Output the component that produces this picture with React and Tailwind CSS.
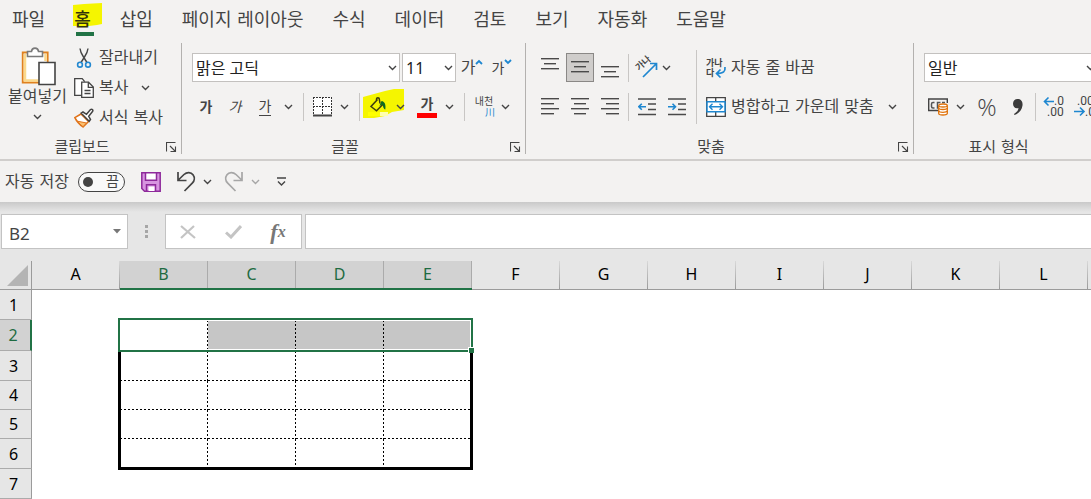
import { useState } from "react";
import clsx from "clsx";

const tabs = ["파일", "홈", "삽입", "페이지 레이아웃", "수식", "데이터", "검토", "보기", "자동화", "도움말"];
const columns = ["A", "B", "C", "D", "E", "F", "G", "H", "I", "J", "K", "L", "M"];
const rows = [
  { id: 1, height: "h-[30px]" },
  { id: 2, height: "h-[31px]" },
  { id: 3, height: "h-[30px]" },
  { id: 4, height: "h-[29px]" },
  { id: 5, height: "h-[29px]" },
  { id: 6, height: "h-[30px]" },
  { id: 7, height: "h-[30px]" },
];
const selectedColumns = ["B", "C", "D", "E"];

/* Shared pieces */

function Chevron({ className }) {
  return (
    <svg className={clsx("w-[9px] h-[6px] shrink-0", className)} viewBox="0 0 9 6" fill="none" stroke="currentColor" strokeWidth="1.4">
      <path d="M1 1l3.5 3.5L8 1" />
    </svg>
  );
}

function IconButton({ label, className, children }) {
  return (
    <button type="button" aria-label={label} className={clsx("flex items-center justify-center shrink-0 h-7", className)}>
      {children}
    </button>
  );
}

function MenuButton({ label, className }) {
  return (
    <IconButton label={label} className={clsx("w-3", className)}>
      <Chevron />
    </IconButton>
  );
}

function Divider({ className }) {
  return <div className={clsx("w-px shrink-0 bg-[#c8c6c4]", className)} />;
}

function Dropdown({ label, value, className }) {
  return (
    <div className={clsx("relative shrink-0 h-[29px]", className)}>
      <select
        aria-label={label}
        defaultValue={value}
        className="appearance-none w-full h-full bg-white border border-[#c3c1bf] pl-[3px] pr-4 text-base leading-[26px] text-[#222] font-['Noto_Sans','Noto_Sans_CJK_KR',sans-serif] outline-none"
      >
        <option>{value}</option>
      </select>
      <Chevron className="absolute right-[3px] top-[12px] pointer-events-none" />
    </div>
  );
}

function Group({ title, launcher = true, className, children }) {
  return (
    <section className={clsx("flex flex-col justify-between shrink-0 h-[111px] border-r border-[#b3b1af]", className)}>
      {children}
      <div className="flex items-end h-[14px] pr-[3px]">
        <h2 className="flex-1 text-center text-[15px] leading-[14px]">{title}</h2>
        {launcher ? (
          <button type="button" aria-label={`${title} 설정`} className="w-[14px] h-[14px] flex items-center justify-center">
            <svg className="w-[11px] h-[11px]" viewBox="0 0 11 11" fill="none" stroke="#444" strokeWidth="1.1">
              <path d="M.5 9.5v-9h9M4 4l5 5M9.5 4.5v5h-5" />
            </svg>
          </button>
        ) : (
          <span className="w-[20px]" />
        )}
      </div>
    </section>
  );
}

/* Icons */

function PasteIcon() {
  return (
    <svg className="w-[36px] h-[39px]" viewBox="0 0 36 39" fill="none">
      <path d="M2.700 5.500h25v30h-25z" fill="#fff" stroke="#e0811e" strokeWidth="1.800" />
      <path d="M5 7v26.500h14" stroke="#fbd98c" strokeWidth="2.500" />
      <path d="M25.500 7v7" stroke="#fbd98c" strokeWidth="2.500" />
      <path d="M7.500 9.500v-5h4c.5-4.500 6.500-4.500 7 0h4v5z" fill="#fff" stroke="#7a7a7a" strokeWidth="1.600" />
      <path d="M19 15.500h16v22H19z" fill="#fff" stroke="#444" strokeWidth="1.600" />
    </svg>
  );
}

function CutIcon() {
  return (
    <svg className="w-[20px] h-[20px]" viewBox="0 0 20 20" fill="none">
      <path d="M6 .5c.3 3 1.500 5.500 3.500 8.500l3.500 5.500M14 .5c-.3 3-1.500 5.500-3.500 8.500L7 14.500" stroke="#444" strokeWidth="1.400" />
      <circle cx="6" cy="16.700" r="2.400" stroke="#2388d0" strokeWidth="1.600" />
      <circle cx="14" cy="16.700" r="2.400" stroke="#2388d0" strokeWidth="1.600" />
    </svg>
  );
}

function CopyIcon() {
  return (
    <svg className="w-[20px] h-[20px]" viewBox="0 0 20 20" fill="none" stroke="#444" strokeWidth="1.300">
      <path d="M7.700 17.300H.7V.7h7.500l2.500 3" fill="#fff" />
      <path d="M7.700 4.200h6.800l4.800 4.800v10.300H7.700z" fill="#fff" />
      <path d="M14.300 4.500v4.800h4.800M10.500 12.500h6M10.500 15.500h6" />
    </svg>
  );
}

function BrushIcon() {
  return (
    <svg className="w-[20px] h-[20px]" viewBox="0 0 20 20" fill="none">
      <path d="M7 6L.8 9.700c1.700 3.500 4.500 6.800 8.200 9.300l5.500-5.500z" fill="#fff" stroke="#e0731a" strokeWidth="1.500" />
      <path d="M3.500 13.200l9 1.800-3.500 3.700c-2-1.500-4-3.300-5.500-5.500z" fill="#fbc070" stroke="#e0731a" />
      <path d="M7.200 5.200l1.800-1.200 3.500 2.300 4-4.800c1.500-1 3 .7 2 2L14.700 8.300l1.800 3.200-1.300 1.800z" fill="#fff" stroke="#444" strokeWidth="1.500" />
    </svg>
  );
}

function BordersIcon() {
  return (
    <svg className="w-[19px] h-[20px]" viewBox="0 0 19 20" fill="none" stroke="#333">
      <path d="M.5 .5h18v17H.5z" fill="#fff" stroke="none" />
      <path d="M.5 0v17M9.500 0v17M18.500 0v17M0 .5h19M0 9.500h19" strokeDasharray="2 1" />
      <path d="M0 18.500h19" stroke="#444" strokeWidth="2" />
    </svg>
  );
}

function BucketIcon() {
  return (
    <svg className="w-[20px] h-[20px] relative" viewBox="0 0 20 20" fill="none">
      <path d="M9.500 2.500L3 9.500l5.500 4.300 6.500-6.500M8.500 4V2c0-1.600 2.800-1.600 2.800 0l.7 4.500" stroke="#3b3b10" strokeWidth="1.500" />
      <path d="M13.500 4c3.500.5 4.500 4 3.800 8.500-2-.3-1.800-3-3-5l-2.800 1.500z" fill="#0c6a22" />
      <path d="M0 15h12v4H0z" fill="#ffff00" />
      <path d="M12 15h8v4h-8z" fill="#ffffb0" />
    </svg>
  );
}

function LinesIcon({ lines }) {
  return (
    <svg className="w-[18px] h-[20px]" viewBox="0 0 18 20" fill="#4a4a4a">
      {lines.map(([x, y, width]) => (
        <rect key={y} x={x} y={y} width={width} height="1.400" />
      ))}
    </svg>
  );
}

function IndentIcon({ increase }) {
  return (
    <svg className="w-[18px] h-[18px]" viewBox="0 0 18 18" fill="none">
      <path d="M0 1h18M10 6h8M10 11.500h8M0 16.500h18" stroke="#4a4a4a" strokeWidth="1.400" />
      <path d={increase ? "M0 8.700h7.500M4.500 5.700l3 3-3 3" : "M8 8.700H.8M3.800 5.700l-3 3 3 3"} stroke="#1e87d0" strokeWidth="1.600" />
    </svg>
  );
}

function OrientationIcon() {
  return (
    <svg className="w-[22px] h-[22px] overflow-visible" viewBox="0 0 22 22" fill="none">
      <text x="3" y="14" fontSize="9" fill="#444" fontWeight="700" transform="rotate(-42 3 14)">가나</text>
      <path d="M7 20L20 7M14 6.500h6.500V13" stroke="#1e87d0" strokeWidth="1.700" />
    </svg>
  );
}

function WrapIcon() {
  return (
    <svg className="w-[20px] h-[22px] overflow-visible" viewBox="0 0 20 22" fill="none">
      <text x="0" y="9" fontSize="9" fontWeight="700" fill="#444">가나</text>
      <text x="0" y="19" fontSize="9" fontWeight="700" fill="#444">다</text>
      <path d="M19 10c.5 4.500-1.500 6.500-8 6.500M14.500 12.500l-4 4 4 4" stroke="#1e87d0" strokeWidth="1.700" />
    </svg>
  );
}

function MergeIcon() {
  return (
    <svg className="w-[20px] h-[20px]" viewBox="0 0 20 20" fill="none">
      <path d="M.7 .7h18.600v18.600H.7zM9.700 1v4M9.700 15v4" stroke="#444" strokeWidth="1.300" fill="#fff" />
      <path d="M1 4.700h18v10H1z" fill="#fff" stroke="#1e87d0" strokeWidth="1.500" />
      <path d="M3.500 9.700h13M6.500 6.700l-3 3 3 3M13.500 6.700l3 3-3 3" stroke="#1e87d0" strokeWidth="1.400" />
    </svg>
  );
}

function CurrencyIcon() {
  return (
    <svg className="w-[20px] h-[18px]" viewBox="0 0 20 18" fill="none">
      <path d="M10 12.500H.7V1h18.600v4" stroke="#444" strokeWidth="1.400" />
      <path d="M6.500 4.500H5a1.500 1.500 0 0 0-1.500 1.500v2.500A1.500 1.500 0 0 0 5 10h1.500M11 10H9.500V4.500h3M14 4.500h3" stroke="#555" strokeWidth="1.500" />
      <path d="M10.700 7.500v8c0 2 8.600 2 8.600 0v-8" fill="#fff" stroke="#e0730b" strokeWidth="1.300" />
      <ellipse cx="15" cy="7.500" rx="4.300" ry="1.500" fill="#fff" stroke="#e0730b" strokeWidth="1.300" />
      <path d="M10.700 10c0 2 8.600 2 8.600 0M10.700 12.800c0 2 8.600 2 8.600 0" stroke="#e0730b" strokeWidth="1.300" />
    </svg>
  );
}

function DecimalIcon({ increase }) {
  return (
    <svg className="w-[22px] h-[22px] overflow-visible font-['Roboto',sans-serif]" viewBox="0 0 22 22" fill="none">
      <text x={increase ? 11 : 3} y="9" fontSize="12" fill="#444">{increase ? ".0" : ".00"}</text>
      <text x={increase ? 4 : 11} y="20" fontSize="12" fill="#444">{increase ? ".00" : ".0"}</text>
      <path
        d={increase ? "M11 5.500H1.500M5.500 1.500l-4 4 4 4" : "M0 15.500h10M6 11.500l4 4-4 4"}
        stroke="#1e87d0"
        strokeWidth="1.600"
      />
    </svg>
  );
}

/* Ribbon */

function TabBar() {
  const [active, setActive] = useState("홈");

  return (
    <nav className="flex gap-[29px] h-[43px] pl-3 pt-[7px] text-lg leading-[25px]">
      {tabs.map((tab) => (
        <button
          key={tab}
          type="button"
          onClick={() => setActive(tab)}
          className={clsx("relative shrink-0 h-[25px] whitespace-nowrap", tab === active && "font-medium text-[#33330a]")}
        >
          {tab === "홈" && (
            <svg className="absolute -left-[1px] -top-[4px] w-[29px] h-[24px]" viewBox="0 0 29 24">
              <path d="M0 2l11-1 18-1v21l-5 1-8 1H0z" fill="#f5f500" />
            </svg>
          )}
          <span className="relative">{tab}</span>
          {tab === active && <span className="absolute left-[2px] -bottom-[4px] w-[18px] h-[4px] bg-[#217346]" />}
        </button>
      ))}
    </nav>
  );
}

function ClipboardGroup() {
  return (
    <Group title="클립보드" className="w-[182px]">
      <div className="flex pl-[7px]">
        <button type="button" className="flex flex-col items-center w-[61px] pt-[4px] text-base leading-[22px]">
          <PasteIcon />
          <span className="whitespace-nowrap">붙여넣기</span>
          <Chevron className="mt-[6px]" />
        </button>
        <div className="flex flex-col pl-[6px] text-base leading-[30px]">
          <button type="button" className="flex items-center gap-[5px] h-[30px]">
            <CutIcon />
            잘라내기
          </button>
          <div className="flex items-center h-[30px]">
            <button type="button" className="flex items-center gap-[5px]">
              <CopyIcon />
              복사
            </button>
            <MenuButton label="복사 옵션" className="ml-[11px]" />
          </div>
          <button type="button" className="flex items-center gap-[5px] h-[30px]">
            <BrushIcon />
            서식 복사
          </button>
        </div>
      </div>
    </Group>
  );
}

function FontGroup() {
  return (
    <Group title="글꼴" className="w-[344px]">
      <div className="flex flex-col gap-[11px] pl-[10px] pt-[10px]">
        <div className="flex items-center h-[29px]">
          <Dropdown label="글꼴 이름" value="맑은 고딕" className="w-[208px]" />
          <Dropdown label="글꼴 크기" value="11" className="w-[54px] ml-[2px]" />
          <IconButton label="글꼴 크기 크게" className="w-[22px] ml-[5px] text-base">
            가
            <svg className="w-[8px] h-[6px] shrink-0 mb-[12px]" viewBox="0 0 8 6" fill="none" stroke="#1e87d0" strokeWidth="1.800">
              <path d="M1 5l3-3 3 3" />
            </svg>
          </IconButton>
          <IconButton label="글꼴 크기 작게" className="w-[20px] ml-[9px] text-sm">
            가
            <svg className="w-[8px] h-[6px] shrink-0 mb-[12px]" viewBox="0 0 8 6" fill="none" stroke="#1e87d0" strokeWidth="1.800">
              <path d="M1 1l3 3 3-3" />
            </svg>
          </IconButton>
        </div>
        <div className="flex items-center h-7 text-sm">
          <IconButton label="굵게" className="w-7 font-bold">가</IconButton>
          <IconButton label="기울임꼴" className="w-[30px] italic">가</IconButton>
          <IconButton label="밑줄" className="w-[30px]">
            <span className="border-b border-[#444] leading-[17px]">가</span>
          </IconButton>
          <MenuButton label="밑줄 옵션" className="ml-[2px]" />
          <Divider className="h-7 ml-[9px]" />
          <IconButton label="테두리" className="w-[22px] ml-[7px]"><BordersIcon /></IconButton>
          <MenuButton label="테두리 옵션" className="ml-[5px]" />
          <Divider className="h-7 ml-[9px]" />
          <div className="relative flex items-center ml-[7px]">
            <svg className="absolute -left-[4px] -top-[4px] w-[41px] h-[30px]" viewBox="0 0 41 30">
              <path d="M0 8l11-3 11-3L31 0h10v21l-12 2-7 4-11 2H0z" fill="#f5f500" />
            </svg>
            <IconButton label="채우기 색" className="w-[22px]"><BucketIcon /></IconButton>
            <MenuButton label="채우기 색 옵션" className="relative ml-[5px]" />
          </div>
          <IconButton label="글꼴 색" className="w-[20px] ml-[11px]">
            <span className="w-[20px] border-b-[5px] border-[#ff0000] leading-[17px] font-bold">가</span>
          </IconButton>
          <MenuButton label="글꼴 색 옵션" className="ml-[6px]" />
          <Divider className="h-7 ml-[9px]" />
          <IconButton label="윗주 필드 표시" className="w-[22px] ml-[8px] flex-col">
            <span className="text-[10px] leading-[10px]">내천</span>
            <span className="text-[10px] leading-[11px] self-end text-[#1e87d0]">川</span>
          </IconButton>
          <MenuButton label="윗주 옵션" className="ml-1" />
        </div>
      </div>
    </Group>
  );
}

function AlignmentGroup() {
  return (
    <Group title="맞춤" className="w-[388px]">
      <div className="flex pt-[7px] pl-[10px]">
        <div className="flex flex-col gap-[11px] pt-[3px] w-[160px]">
          <div className="flex items-center h-[29px]">
            <IconButton label="위쪽 맞춤" className="w-7"><LinesIcon lines={[[0, 0, 18], [3, 5, 12], [0, 10, 18]]} /></IconButton>
            <IconButton label="가운데 맞춤" className="w-7 ml-[2px] h-[29px] bg-[#cfcdcb] border border-[#8a8886]">
              <LinesIcon lines={[[0, 3, 18], [3, 8, 12], [0, 13, 18]]} />
            </IconButton>
            <IconButton label="아래쪽 맞춤" className="w-7 ml-[2px]"><LinesIcon lines={[[0, 8, 18], [3, 13, 12], [0, 18, 18]]} /></IconButton>
            <Divider className="h-7 ml-[4px]" />
            <IconButton label="방향" className="w-[22px] ml-[7px]"><OrientationIcon /></IconButton>
            <MenuButton label="방향 옵션" className="ml-[2px]" />
          </div>
          <div className="flex items-center h-7">
            <IconButton label="왼쪽 맞춤" className="w-7"><LinesIcon lines={[[0, 1, 18], [0, 6, 13], [0, 11, 18], [0, 16, 13]]} /></IconButton>
            <IconButton label="텍스트 가운데 맞춤" className="w-7 ml-[2px]"><LinesIcon lines={[[0, 1, 18], [3, 6, 12], [0, 11, 18], [3, 16, 12]]} /></IconButton>
            <IconButton label="오른쪽 맞춤" className="w-7 ml-[2px]"><LinesIcon lines={[[0, 1, 18], [5, 6, 13], [0, 11, 18], [5, 16, 13]]} /></IconButton>
            <Divider className="h-7 ml-[4px]" />
            <IconButton label="내어쓰기" className="w-[22px] ml-[7px]"><IndentIcon /></IconButton>
            <IconButton label="들여쓰기" className="w-[22px] ml-[8px]"><IndentIcon increase /></IconButton>
          </div>
        </div>
        <Divider className="h-[74px]" />
        <div className="flex flex-col gap-[11px] pt-[3px] pl-[9px] text-base">
          <button type="button" className="flex items-center gap-[5px] h-[29px]">
            <WrapIcon />
            자동 줄 바꿈
          </button>
          <div className="flex items-center h-7">
            <button type="button" className="flex items-center gap-[5px] whitespace-nowrap">
              <MergeIcon />
              병합하고 가운데 맞춤
            </button>
            <MenuButton label="병합 옵션" className="ml-[13px]" />
          </div>
        </div>
      </div>
    </Group>
  );
}

function NumberGroup() {
  return (
    <Group title="표시 형식" launcher={false} className="w-[193px]">
      <div className="flex flex-col gap-[11px] pl-[10px] pt-[10px]">
        <Dropdown label="표시 형식" value="일반" className="w-[174px]" />
        <div className="flex items-center h-7">
          <IconButton label="통화" className="w-[22px] ml-[3px]"><CurrencyIcon /></IconButton>
          <MenuButton label="통화 옵션" className="ml-[5px]" />
          <IconButton label="백분율" className="w-[22px] ml-[10px] text-2xl font-light font-['Open_Sans',sans-serif]">%</IconButton>
          <IconButton label="쉼표" className="w-[20px] ml-[10px]">
            <svg className="w-[10px] h-[16px]" viewBox="0 0 10 16" fill="#3b3b3b">
              <path d="M4.500 0C8 0 10 2.500 9.500 6.500 9 11 6 14.500 1.500 16l-.5-1c2.500-1.500 4-3 4.500-6C2.500 10 0 8 0 4.800 0 2 2 0 4.500 0z" />
            </svg>
          </IconButton>
          <Divider className="h-7 ml-[7px]" />
          <IconButton label="자릿수 늘림" className="w-[22px] ml-[7px]"><DecimalIcon increase /></IconButton>
          <IconButton label="자릿수 줄임" className="w-[22px] ml-[9px]"><DecimalIcon /></IconButton>
        </div>
      </div>
    </Group>
  );
}

function QuickAccess() {
  return (
    <div className="flex items-center h-[41px] pl-[5px] text-base">
      <label htmlFor="autosave" className="w-[73px] whitespace-nowrap">자동 저장</label>
      <span className="relative w-[47px] h-[20px]">
        <input id="autosave" type="checkbox" role="switch" className="appearance-none block w-full h-full rounded-full border border-[#444] bg-[#f9f9f9]" />
        <span className="absolute left-[5px] top-[5px] w-[10px] h-[10px] rounded-full bg-[#444] pointer-events-none" />
        <span className="absolute right-[6px] top-0 text-sm leading-[19px] pointer-events-none">끔</span>
      </span>
      <IconButton label="저장" className="w-[20px] ml-[16px]">
        <svg className="w-[20px] h-[20px]" viewBox="0 0 20 20" stroke="#8e2a9b" strokeWidth="1.500">
          <path d="M.8 .8h18.400v18.400H3.500L.8 16.500z" fill="#d795e0" />
          <path d="M4.500 .8h11v7.500h-11z" fill="#fff" />
          <path d="M5.500 12.800h9v6.400h-9z" fill="#d795e0" />
          <path d="M7.500 14.500h6v4.500h-6z" fill="#fff" stroke="none" />
        </svg>
      </IconButton>
      <IconButton label="실행 취소" className="w-[20px] ml-[15px]">
        <svg className="w-[20px] h-[21px]" viewBox="0 0 20 21" fill="none" stroke="#444" strokeWidth="1.700">
          <path d="M2 1v8.500h8.500M2.300 9L8 3.500c3-2.800 7-2.500 9 .3 2 2.700 1.500 6-.5 8L8.500 20" />
        </svg>
      </IconButton>
      <MenuButton label="실행 취소 옵션" className="ml-[5px]" />
      <IconButton label="다시 실행" className="w-[20px] ml-[11px]">
        <svg className="w-[20px] h-[21px]" viewBox="0 0 20 21" fill="none" stroke="#a6a6a6" strokeWidth="1.700">
          <path d="M18 1v8.500H9.500M17.700 9L12 3.500C9 .7 5 1 3 3.800c-2 2.700-1.500 6 .5 8l8 8.200" />
        </svg>
      </IconButton>
      <MenuButton label="다시 실행 옵션" className="ml-[5px] text-[#a6a6a6]" />
      <IconButton label="빠른 실행 도구 모음 사용자 지정" className="w-3 ml-[14px]">
        <svg className="w-[9px] h-[9px]" viewBox="0 0 9 9" fill="none" stroke="#444" strokeWidth="1.400">
          <path d="M0 1h9M1 4.500L4.500 8 8 4.500" />
        </svg>
      </IconButton>
    </div>
  );
}

/* Formula bar */

function FormulaBar() {
  return (
    <div className="flex h-[59px] pt-[12px] bg-[linear-gradient(#c9c9c9,#e6e6e6_10px)]">
      <div className="relative w-[127px] h-[35px] ml-px shrink-0">
        <input
          aria-label="이름 상자"
          defaultValue="B2"
          className="w-full h-full bg-white border border-[#c3c3c3] pl-[7px] pt-[3px] text-[17px] text-[#444] font-['Noto_Sans',sans-serif] outline-none"
        />
        <svg className="absolute right-[7px] top-[15px] w-[8px] h-[5px]" viewBox="0 0 8 5" fill="#777">
          <path d="M0 0h8L4 4.500z" />
        </svg>
      </div>
      <div className="flex flex-col justify-center gap-[2px] h-[35px] w-[37px] items-center shrink-0">
        <span className="w-[3px] h-[3px] bg-[#a6a6a6]" />
        <span className="w-[3px] h-[3px] bg-[#a6a6a6]" />
        <span className="w-[3px] h-[3px] bg-[#a6a6a6]" />
      </div>
      <div className="flex items-center w-[137px] h-[35px] shrink-0 bg-white border border-[#c3c3c3]">
        <IconButton label="취소" className="w-[44px]">
          <svg className="w-[16px] h-[14px]" viewBox="0 0 16 14" fill="none" stroke="#c4c4c4" strokeWidth="2.200">
            <path d="M1 1l14 12M14 1L1 13" />
          </svg>
        </IconButton>
        <IconButton label="입력" className="w-[46px]">
          <svg className="w-[17px] h-[14px]" viewBox="0 0 17 14" fill="none" stroke="#c4c4c4" strokeWidth="3">
            <path d="M1 7.500l5 4.500L16 1" />
          </svg>
        </IconButton>
        <IconButton label="함수 삽입" className="w-[44px] font-['Liberation_Serif',serif] italic font-bold text-[#777]">
          <span className="text-[22px] leading-[22px]">f</span>
          <span className="text-base leading-[22px]">x</span>
        </IconButton>
      </div>
      <input aria-label="수식 입력줄" className="flex-1 min-w-0 h-[35px] ml-[3px] bg-white border border-r-0 border-[#c3c3c3] outline-none" />
    </div>
  );
}

/* Worksheet */

const dashRight = "bg-[repeating-linear-gradient(#000_0_2px,transparent_2px_4px)] bg-[length:1px_100%] bg-right bg-no-repeat";
const dashBottom = "bg-[repeating-linear-gradient(90deg,#000_0_2px,transparent_2px_4px)] bg-[length:100%_1px] bg-bottom bg-no-repeat";

function Cell({ column, row }) {
  const inTable = selectedColumns.includes(column) && row >= 2 && row <= 6;
  if (!inTable) return <td className="p-0" />;

  const selected = row === 2;
  return (
    <td className={clsx("relative p-0", selected && column !== "B" && "bg-[#c6c6c6]")}>
      {column !== "E" && <span className={clsx("absolute inset-0", dashRight)} />}
      {row > 2 && row < 6 && <span className={clsx("absolute inset-0", dashBottom)} />}
      {/* table frame and selection frame both start at B2 */}
      {selected && column === "B" && (
        <>
          <span className="absolute z-10 -left-[2px] top-[30px] w-[355px] h-[120px] border-[3px] border-t-0 border-black" />
          <span className="absolute z-10 -left-[2px] -top-[2px] w-[355px] h-[34px] border-2 border-[#217346] shadow-[inset_0_0_0_1px_#fff]" />
          <span className="absolute z-10 left-[348px] top-[27px] w-[6px] h-[6px] border-l border-t border-white bg-[#217346]" />
        </>
      )}
    </td>
  );
}

function Worksheet() {
  return (
    <div className="overflow-hidden bg-white">
      <table className="table-fixed w-[1176px] border-separate border-spacing-0 font-['Noto_Sans',sans-serif] text-base leading-[20px] text-black">
        <thead>
          <tr className="h-[29px] bg-[#e6e6e6]">
            <th className="w-[32px] p-0 border-r border-b border-[#9b9b9b]">
              <svg className="w-[21px] h-[21px] ml-auto mr-[3px] mt-[1px]" viewBox="0 0 21 21" fill="#b4b4b4">
                <path d="M21 0v21H0z" />
              </svg>
            </th>
            {columns.map((column) => {
              const selected = selectedColumns.includes(column);
              return (
                <th
                  key={column}
                  scope="col"
                  className={clsx(
                    "w-[88px] p-0 pr-px pb-[2px] font-normal bg-[length:1px_100%] bg-right bg-no-repeat",
                    selected
                      ? "bg-[#d2d2d2] text-[#1e6b41] border-b-2 border-[#217346] bg-[linear-gradient(#ababab,#ababab)]"
                      : "border-b border-[#9b9b9b] bg-[linear-gradient(#d8d8d8,#9b9b9b)]"
                  )}
                >
                  {column}
                </th>
              );
            })}
          </tr>
        </thead>
        <tbody>
          {rows.map(({ id, height }) => (
            <tr key={id} className={height}>
              <th
                scope="row"
                className={clsx(
                  "p-0 pr-[4px] font-normal border-b border-b-[#ababab]",
                  id === 2 ? "bg-[#d2d2d2] text-[#1e6b41] border-r-2 border-r-[#217346]" : "bg-[#e6e6e6] border-r border-r-[#9b9b9b]"
                )}
              >
                {id}
              </th>
              {columns.map((column) => (
                <Cell key={column} column={column} row={id} />
              ))}
            </tr>
          ))}
        </tbody>
      </table>
    </div>
  );
}

export default function App() {
  return (
    <div className="min-h-screen overflow-hidden bg-white text-[#444] font-['DejaVu_Sans','Noto_Sans_CJK_KR',sans-serif]">
      <header className="bg-[#f3f2f1]">
        <TabBar />
        <div className="flex h-[118px] overflow-hidden border-b-2 border-[#d0cecc]">
          <ClipboardGroup />
          <FontGroup />
          <AlignmentGroup />
          <NumberGroup />
        </div>
        <QuickAccess />
      </header>
      <FormulaBar />
      <Worksheet />
    </div>
  );
}
